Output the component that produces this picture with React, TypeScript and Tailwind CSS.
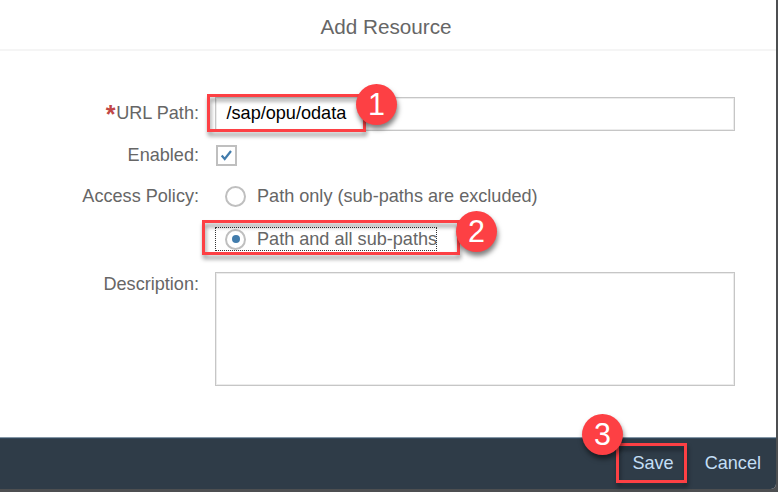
import type { ReactNode } from 'react';

function Label({ children, required = false }: { children: ReactNode; required?: boolean }) {
  return (
    <label className="flex w-[199px] shrink-0 justify-end whitespace-nowrap leading-[22px]">
      {required && <span className="w-[10.5px] text-[25px] font-bold leading-[24px] text-[#c14646]">*</span>}
      {children}
    </label>
  );
}

function Radio({ checked = false }: { checked?: boolean }) {
  return (
    <span className="flex size-[21px] shrink-0 items-center justify-center rounded-full border-2 border-[#bfbfbf] bg-white">
      {checked && <span className="size-2 rounded-full bg-[#427cac]" />}
    </span>
  );
}

function Highlight({ className }: { className: string }) {
  return (
    <div
      className={`pointer-events-none absolute border-3 border-[#fd4044] drop-shadow-[1px_4px_2px_rgba(0,0,0,0.42)] ${className}`}
    />
  );
}

function Step({ n, className }: { n: number; className: string }) {
  return (
    <div
      className={`absolute flex size-[41px] items-center justify-center rounded-full bg-[#fd4044] text-[30.5px] leading-none text-white shadow-[1px_4px_5px_rgba(0,0,0,0.5)] ${className}`}
    >
      {n}
    </div>
  );
}

export default function App() {
  return (
    <div className="relative h-[492px] w-[778px] overflow-hidden bg-[#4d4f51] font-['Liberation_Sans',Arial,sans-serif] text-[18.1px] text-[#666]">
      <div className="flex h-[489px] w-[776px] flex-col overflow-hidden rounded-br-[5px] bg-white">
        <header className="flex h-[51px] shrink-0 items-center justify-center border-b-2 border-[#f5f5f5] pt-1 pr-1 text-[20.7px]">
          Add Resource
        </header>
        <main className="flex grow flex-col pt-[45px]">
          <div className="flex h-[35px] items-center gap-4">
            <Label required>URL Path:</Label>
            <div className="flex h-[34px] w-[520px] items-center border border-[#c6c6c6] pl-[10.5px] text-black shadow-[inset_0_0_0_1px_#ececec]">
              /sap/opu/odata
            </div>
          </div>
          <div className="mt-[13px] flex h-[22px] items-center gap-[17px]">
            <Label>Enabled:</Label>
            <span className="flex size-[21px] items-center justify-center border-2 border-[#bfbfbf]">
              <svg className="size-[13px]" viewBox="0 0 13 13" fill="none" stroke="#427cac" strokeWidth="2.2">
                <path d="M1.7 6.5 4.7 10 11 2" />
              </svg>
            </span>
          </div>
          <div className="mt-[18px] flex h-[24px] items-center gap-[26px]">
            <Label>Access Policy:</Label>
            <div className="flex items-center gap-[11px]">
              <Radio />
              <span className="leading-[22px]">Path only (sub-paths are excluded)</span>
            </div>
          </div>
          <div className="mt-[19px] ml-[215px] flex h-[24px] w-[222px] items-center gap-[11px] whitespace-nowrap border border-dotted border-[#333] pl-[9px]">
            <Radio checked />
            <span className="pt-px leading-[21px]">Path and all sub-paths</span>
          </div>
          <div className="mt-[21px] flex items-start gap-4">
            <div className="pt-px">
              <Label>Description:</Label>
            </div>
            <div className="h-[114px] w-[520px] border border-[#c6c6c6] shadow-[inset_0_0_0_1px_#ececec]" />
          </div>
        </main>
        <footer className="flex h-[52px] shrink-0 items-center justify-end gap-[31px] border-t border-[#8496a5] bg-[#2f3c48] pr-[15px] text-[#c3def5] shadow-[inset_0_1px_0_#33485b]">
          <span>Save</span>
          <span>Cancel</span>
        </footer>
      </div>
      <Highlight className="top-[94px] left-[207px] h-[38px] w-[159px]" />
      <Highlight className="top-[220px] left-[202px] h-[35px] w-[258px]" />
      <Highlight className="top-[443px] left-[616px] h-[40px] w-[71px]" />
      <Step n={1} className="top-[84px] left-[356px]" />
      <Step n={2} className="top-[211px] left-[456px]" />
      <Step n={3} className="top-[414px] left-[582px]" />
    </div>
  );
}
